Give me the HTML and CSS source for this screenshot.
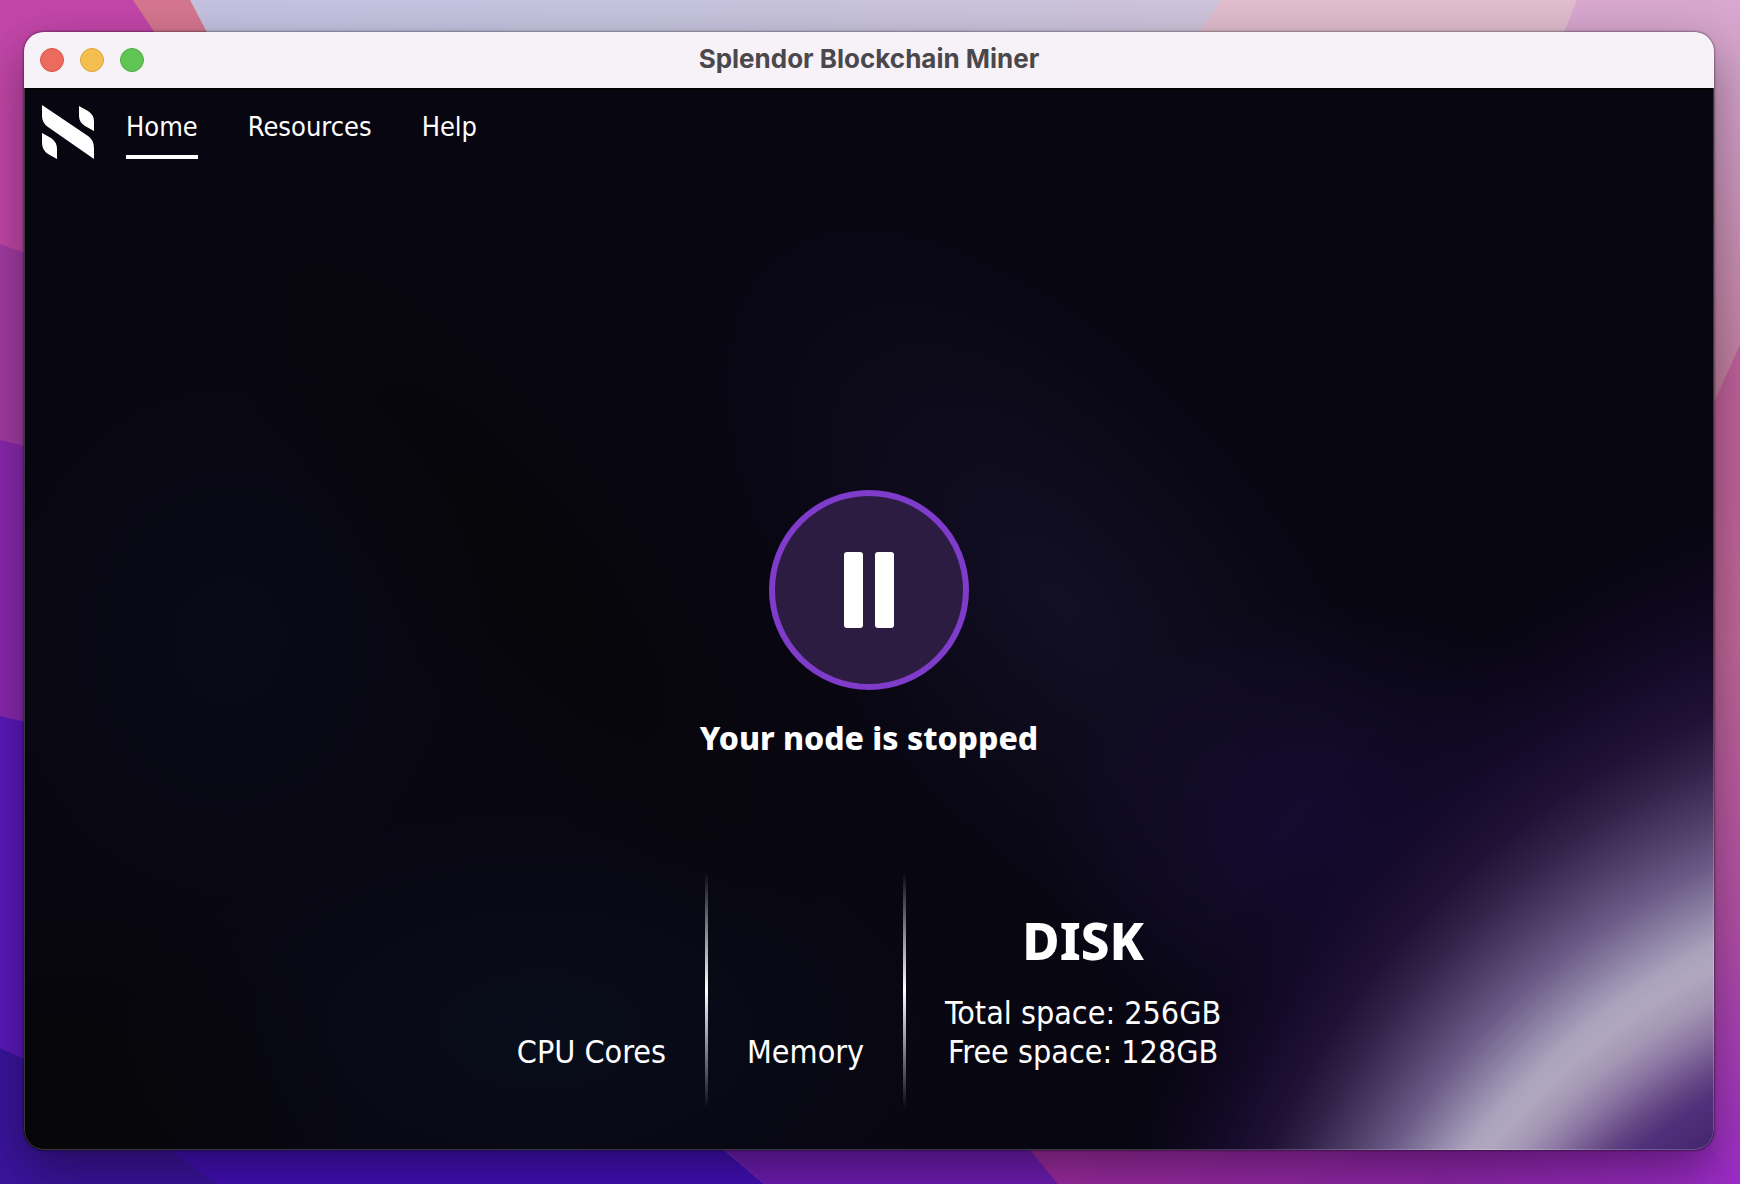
FILE: index.html
```html
<!DOCTYPE html>
<html lang="en">
<head>
<meta charset="utf-8">
<title>Splendor Blockchain Miner</title>
<link rel="stylesheet" href="styles.css">
</head>
<body>
<svg class="wallpaper" viewBox="0 0 1740 1184" preserveAspectRatio="none" aria-hidden="true">
  <defs>
    <linearGradient id="sky" x1="0" x2="1"><stop offset="0" stop-color="#c3c1e0"/><stop offset=".35" stop-color="#c5c3de"/><stop offset="1" stop-color="#d6c4d8"/></linearGradient>
    <linearGradient id="rightSide" x1="0" y1="0" x2="0" y2="1"><stop offset="0" stop-color="#d8a8d0"/><stop offset=".3" stop-color="#d09cc4"/><stop offset="1" stop-color="#c27c9c"/></linearGradient>
    <linearGradient id="rightLow" x1="0" y1="0" x2="0" y2="1"><stop offset="0" stop-color="#c0609c"/><stop offset=".35" stop-color="#c06898"/><stop offset=".7" stop-color="#b44ea8"/><stop offset="1" stop-color="#9c2cc8"/></linearGradient>
    <linearGradient id="floor" x1="0" x2="1"><stop offset="0" stop-color="#a02ca0"/><stop offset=".6" stop-color="#9026ac"/><stop offset="1" stop-color="#9c2cc8"/></linearGradient>
  </defs>
  <rect width="1740" height="1184" fill="url(#sky)"/>
  <path d="M0 0H133L800 400H0Z" fill="#c246a8"/>
  <path d="M133 0H190L400 400Z" fill="#d4768e"/>
  <path d="M1222 0H1577L1400 450H900Z" fill="#e0bccd"/>
  <path d="M1577 0H1740V420H1410Z" fill="url(#rightSide)"/>
  <path d="M1740 345V1184H1360Z" fill="url(#rightLow)"/>
  <path d="M0 244L400 390V800H0Z" fill="#a23ca4"/>
  <path d="M0 440L400 540V900H0Z" fill="#8a28ae"/>
  <path d="M0 716L700 880L724 1150L764 1184H0Z" fill="#5c18bc"/>
  <path d="M0 1048L100 1095L170 1150L218 1184H0Z" fill="#3a149c"/>
  <path d="M218 1184L170 1150L100 1095L700 900L724 1150L764 1184Z" fill="#420fb6"/>
  <path d="M764 1184L724 1150L650 1000H1000L1058 1184Z" fill="#701cb4"/>
  <path d="M1058 1184L1030 1150L1000 1120H1690L1740 1184Z" fill="url(#floor)"/>
</svg>

<div class="window">
  <header class="titlebar">
    <div class="lights">
      <button class="light light-close" type="button" aria-label="Close"></button>
      <button class="light light-minimize" type="button" aria-label="Minimize"></button>
      <button class="light light-zoom" type="button" aria-label="Zoom"></button>
    </div>
    <h1 class="title">Splendor Blockchain Miner</h1>
  </header>

  <div class="app">
    <svg class="backdrop" viewBox="24 88 1690 1062" preserveAspectRatio="none" aria-hidden="true">
      <defs>
        <radialGradient id="beam" gradientUnits="userSpaceOnUse" cx="2022" cy="1382" r="924" fx="2026" fy="1696" fr="560">
          <stop offset="0" stop-color="#3c2064"/>
          <stop offset=".107" stop-color="#42246c"/>
          <stop offset=".179" stop-color="#50307a"/>
          <stop offset=".214" stop-color="#644684"/>
          <stop offset=".268" stop-color="#8a75a2"/>
          <stop offset=".315" stop-color="#a497b4"/>
          <stop offset=".357" stop-color="#b0a7bf"/>
          <stop offset=".39" stop-color="#aaa1bc"/>
          <stop offset=".429" stop-color="#9389aa"/>
          <stop offset=".5" stop-color="#6c5b87"/>
          <stop offset=".571" stop-color="#4e3d66"/>
          <stop offset=".643" stop-color="#33234b"/>
          <stop offset=".714" stop-color="#211136"/>
          <stop offset=".82" stop-color="#150a2a" stop-opacity=".85"/>
          <stop offset="1" stop-color="#0c0620" stop-opacity="0"/>
        </radialGradient>
        <radialGradient id="indigo"><stop offset="0" stop-color="#141028"/><stop offset="1" stop-color="#141028" stop-opacity="0"/></radialGradient>
        <radialGradient id="violet"><stop offset="0" stop-color="#160c34"/><stop offset="1" stop-color="#160c34" stop-opacity="0"/></radialGradient>
        <radialGradient id="navy"><stop offset="0" stop-color="#090e1c"/><stop offset="1" stop-color="#090e1c" stop-opacity="0"/></radialGradient>
        <radialGradient id="black"><stop offset="0" stop-color="#070608"/><stop offset="1" stop-color="#070608" stop-opacity="0"/></radialGradient>
      </defs>
      <rect x="24" y="88" width="1690" height="1062" fill="#080611"/>
      <ellipse cx="540" cy="1030" rx="420" ry="240" fill="url(#navy)" opacity=".8"/>
      <ellipse cx="230" cy="640" rx="260" ry="300" fill="url(#navy)" opacity=".5"/>
      <ellipse cx="1060" cy="600" rx="480" ry="240" fill="url(#indigo)" transform="rotate(50 1060 600)" opacity=".85"/>
      <ellipse cx="1340" cy="840" rx="300" ry="240" fill="url(#violet)"/>
      <ellipse cx="520" cy="560" rx="480" ry="150" fill="url(#black)" transform="rotate(52 520 560)" opacity=".8"/>
      <ellipse cx="60" cy="1110" rx="300" ry="240" fill="url(#black)"/>
      <rect x="24" y="88" width="1690" height="1062" fill="url(#beam)"/>
    </svg>

    <nav class="nav" aria-label="Main">
      <svg class="logo" viewBox="0 0 52 54" role="img" aria-label="Splendor">
        <path fill="#fff" d="M0 0L46 31Q52 35 52 43V54L6 22Q0 18 0 11ZM37 1L46 6Q52 10 52 16V26L43 21Q37 17 37 11ZM0 28L9 33Q15 37 15 44V54L6 49Q0 45 0 38Z"/>
      </svg>
      <a class="nav-link nav-link-active" href="#home" aria-current="page">Home</a>
      <a class="nav-link" href="#resources">Resources</a>
      <a class="nav-link" href="#help">Help</a>
    </nav>

    <main class="main" id="home">
      <section class="node">
        <button class="toggle" type="button" aria-label="Toggle node">
          <span class="bar"></span><span class="bar"></span>
        </button>
        <p class="status">Your node is stopped</p>
      </section>

      <section class="stats">
        <div class="stat"><p>CPU Cores</p></div>
        <div class="divider"></div>
        <div class="stat"><p>Memory</p></div>
        <div class="divider"></div>
        <div class="stat">
          <h2 class="stat-title">DISK</h2>
          <p>Total space: 256GB</p>
          <p>Free space: 128GB</p>
        </div>
      </section>
    </main>
  </div>
</div>
</body>
</html>
```
FILE: styles.css
```css
* {
  box-sizing: border-box;
}

body {
  margin: 0;
  min-height: 100vh;
  padding: 32px 26px 34px 24px;
  display: flex;
  position: relative;
  color: #fff;
  font-family: Tahoma, "DejaVu Sans Condensed", "DejaVu Sans", sans-serif;
}

h1, h2, p {
  margin: 0;
}

.wallpaper,
.backdrop {
  position: absolute;
  inset: 0;
  width: 100%;
  height: 100%;
}

.window {
  flex: 1;
  display: flex;
  flex-direction: column;
  position: relative;
  border-radius: 20px;
  overflow: hidden;
  box-shadow: 0 0 2px 1px rgba(0, 0, 0, .35), 0 20px 50px rgba(0, 0, 0, .4);
}

.window::after {
  content: "";
  position: absolute;
  inset: 0;
  border-radius: 20px;
  box-shadow: inset 0 0 0 1px rgba(255, 255, 255, .2);
  pointer-events: none;
}

.titlebar {
  height: 56px;
  padding: 0 16px;
  display: grid;
  grid-template-columns: 1fr auto 1fr;
  align-items: center;
  background: #f7f2f8;
}

.lights {
  display: flex;
  gap: 16px;
}

.light {
  width: 24px;
  height: 24px;
  padding: 0;
  border: 1px solid;
  border-radius: 50%;
}

.light-close {
  background: #ed6a5e;
  border-color: #d35548;
}

.light-minimize {
  background: #f5bf4f;
  border-color: #d9a33c;
}

.light-zoom {
  background: #61c554;
  border-color: #4fab42;
}

.title {
  padding-bottom: 2px;
  color: #4a484c;
  font: 700 26px/32px Inter, sans-serif;
}

.app {
  flex: 1;
  display: flex;
  flex-direction: column;
  position: relative;
  border-top: 2px solid #000;
  background: #080611;
}

.nav {
  position: relative;
  display: flex;
  align-items: flex-start;
  gap: 50px;
  padding: 15px 18px 0;
}

.logo {
  width: 52px;
  height: 54px;
  margin-right: -18px;
}

.nav-link {
  padding: 5px 0 11px;
  border-bottom: 4px solid transparent;
  color: #fff;
  font-size: 27px;
  line-height: 34px;
  text-decoration: none;
}

.nav-link-active {
  border-color: #fff;
}

.main {
  flex: 1;
  position: relative;
  display: flex;
  flex-direction: column;
  justify-content: flex-end;
  align-items: center;
  padding-bottom: 42px;
}

.node {
  display: flex;
  flex-direction: column;
  align-items: center;
  gap: 28px;
  margin-bottom: 114px;
}

.toggle {
  width: 200px;
  height: 200px;
  padding: 0;
  display: flex;
  align-items: center;
  justify-content: center;
  gap: 12px;
  border: 6px solid #7f3bca;
  border-radius: 50%;
  background: #2d1c42;
}

.bar {
  width: 19px;
  height: 76px;
  border-radius: 3px;
  background: #fff;
}

.status {
  font: 800 32px/40px "Noto Sans", sans-serif;
}

.stats {
  display: flex;
  font-size: 32px;
  line-height: 39px;
  text-align: center;
}

.stat {
  display: flex;
  flex-direction: column;
  justify-content: flex-end;
  padding: 0 39px 36px;
}

.stat-title {
  margin-bottom: 24px;
  font: 800 51px/60px "Noto Sans", sans-serif;
}

.divider {
  width: 3px;
  height: 236px;
  background: linear-gradient(transparent, #fff, transparent);
}
```
